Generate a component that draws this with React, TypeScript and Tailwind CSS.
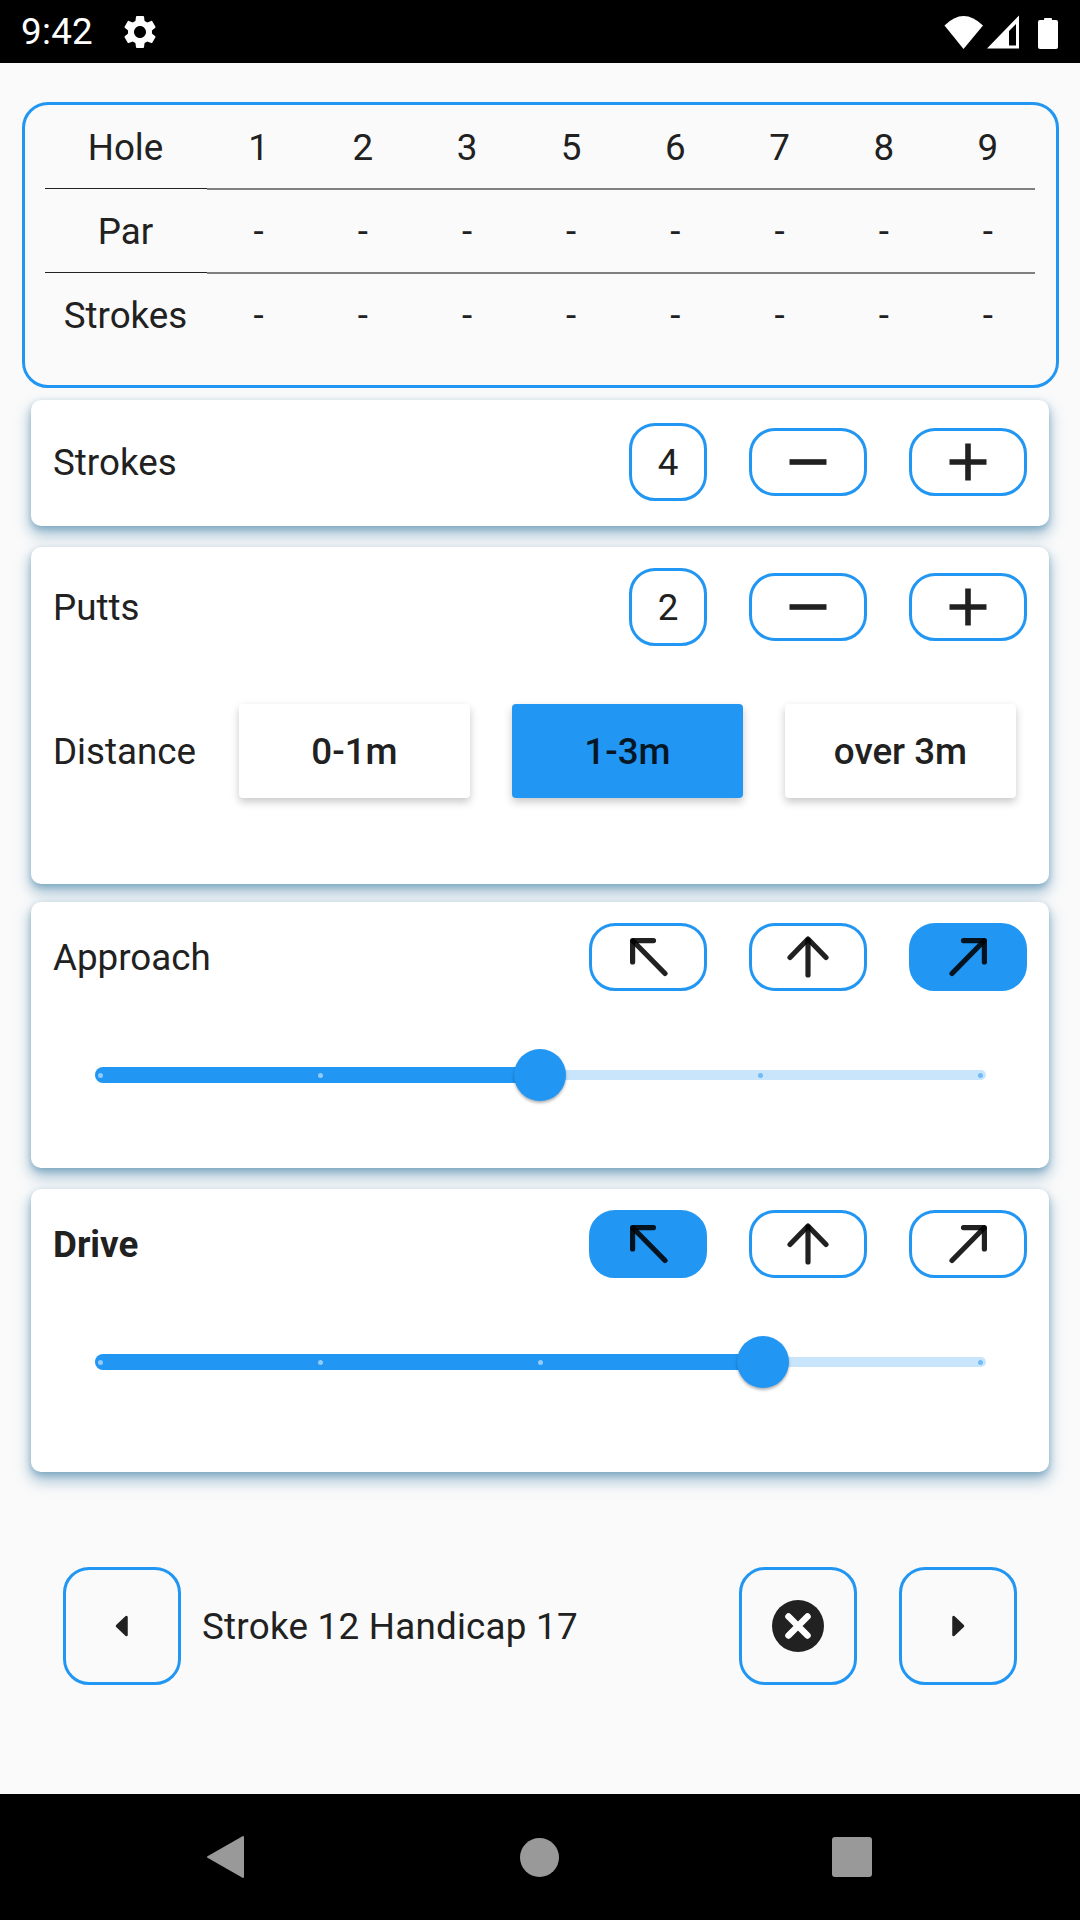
const holes = ["1", "2", "3", "5", "6", "7", "8", "9"];

const font = "font-['Roboto',sans-serif]";

function StatusBar() {
  return (
    <div className="flex h-[63px] shrink-0 items-center bg-black pl-[21px] pr-[21px] text-white">
      <span className="text-[36.75px] leading-[63px] tracking-[0.3px]">9:42</span>
      <svg className="ml-[27px] h-[40px] w-[40px]" viewBox="0 0 24 24" fill="white">
        <path d="M19.14,12.94c0.04-0.3,0.06-0.61,0.06-0.94c0-0.32-0.02-0.64-0.07-0.94l2.03-1.58c0.18-0.14,0.23-0.41,0.12-0.61 l-1.92-3.32c-0.12-0.22-0.37-0.29-0.59-0.22l-2.39,0.96c-0.5-0.38-1.03-0.7-1.62-0.94L14.4,2.81c-0.04-0.24-0.24-0.41-0.48-0.41 h-3.84c-0.24,0-0.43,0.17-0.47,0.41L9.25,5.35C8.66,5.59,8.12,5.92,7.63,6.29L5.24,5.33c-0.22-0.08-0.47,0-0.59,0.22L2.74,8.87 C2.62,9.08,2.66,9.34,2.86,9.48l2.03,1.58C4.84,11.36,4.8,11.69,4.8,12s0.02,0.64,0.07,0.94l-2.03,1.58 c-0.18,0.14-0.23,0.41-0.12,0.61l1.92,3.32c0.12,0.22,0.37,0.29,0.59,0.22l2.39-0.96c0.5,0.38,1.03,0.7,1.62,0.94l0.36,2.54 c0.05,0.24,0.24,0.41,0.48,0.41h3.84c0.24,0,0.44-0.17,0.47-0.41l0.36-2.54c0.59-0.24,1.13-0.56,1.62-0.94l2.39,0.96 c0.22,0.08,0.47,0,0.59-0.22l1.92-3.32c0.12-0.22,0.07-0.47-0.12-0.61L19.14,12.94z M12,15.6c-1.98,0-3.6-1.62-3.6-3.6 s1.62-3.6,3.6-3.6s3.6,1.62,3.6,3.6S13.98,15.6,12,15.6z" />
      </svg>
      <svg className="ml-auto h-[34px] w-[115px]" viewBox="0 0 115 34" fill="white">
        <path d="M0.5 10.5 Q19.5 -8.5 39 10.5 L19.5 34 Z" />
        <path fillRule="evenodd" d="M43 33.5 L75 0.5 V33.5 Z M65 30.5 H72 V9 L65 16 Z" />
        <path d="M100 4 Q100 3 101 3 H107 Q108 3 108 4 V5 H112 Q114 5 114 7 V32 Q114 34 112 34 H96 Q94 34 94 32 V7 Q94 5 96 5 H100 Z" />
      </svg>
    </div>
  );
}

function ScoreTable() {
  const rows = [
    { label: "Hole", cells: holes, line: true },
    { label: "Par", cells: holes.map(() => "-"), line: true },
    { label: "Strokes", cells: holes.map(() => "-"), line: false },
  ];
  return (
    <div className="mx-[21.5px] mt-[39px] h-[286px] rounded-[26px] border-[3px] border-[#2196f3] pl-[20px] pr-[21px]">
      <div className="overflow-hidden">
        <div className="w-[997px]">
          {rows.map((row) => (
            <div key={row.label} className="flex h-[84px] items-stretch first:h-[85px]">
              <div
                className={`mb-[1px] flex w-[162px] items-center justify-center ${row.line ? "border-b border-[#222222] pt-[2px]" : ""}`}
              >
                {row.label}
              </div>
              {row.cells.map((cell, i) => (
                <div
                  key={i}
                  className={`flex w-[104.2px] items-center justify-center ${row.line ? "border-b-2 border-[#808080] pt-[2px]" : ""}`}
                >
                  {cell}
                </div>
              ))}
            </div>
          ))}
        </div>
      </div>
    </div>
  );
}

function Card({ className, children }: { className: string; children: React.ReactNode }) {
  return (
    <div
      className={`mx-[31px] rounded-[10px] bg-white pl-[22px] pr-[22px] shadow-[0_8px_15px_1px_rgba(60,125,165,0.45),0_3px_6px_rgba(60,125,165,0.4)] ${className}`}
    >
      {children}
    </div>
  );
}

function Outlined({ className, active, children }: { className: string; active?: boolean; children?: React.ReactNode }) {
  return (
    <div
      className={`flex items-center justify-center rounded-[26px] border-[3px] border-[#2196f3] ${active ? "bg-[#2196f3]" : ""} ${className}`}
    >
      {children}
    </div>
  );
}

function Minus() {
  return (
    <svg className="h-[38px] w-[38px]" viewBox="0 0 38 38">
      <rect x="0.5" y="16.2" width="37" height="5.6" fill="#212121" />
    </svg>
  );
}

function Plus() {
  return (
    <svg className="h-[38px] w-[38px]" viewBox="0 0 38 38">
      <path d="M0.5 16.2H16.2V0.5H21.8V16.2H37.5V21.8H21.8V37.5H16.2V21.8H0.5Z" fill="#212121" />
    </svg>
  );
}

function Counter({ label, value }: { label: string; value: string }) {
  return (
    <div className="flex h-[78px] items-center">
      <span className="flex-1 pt-[1px]">{label}</span>
      <div className="flex items-center gap-[42px]">
        <Outlined className="h-[78px] w-[78px] pt-[2px]">{value}</Outlined>
        <Outlined className="h-[68px] w-[118px]">
          <Minus />
        </Outlined>
        <Outlined className="h-[68px] w-[118px]">
          <Plus />
        </Outlined>
      </div>
    </div>
  );
}

function ArrowLeftUp() {
  return (
    <svg className="h-[40px] w-[40px]" viewBox="0 0 40 40" fill="none" stroke="rgba(0,0,0,0.87)" strokeWidth="5.2" strokeLinecap="round">
      <path d="M4.6 25V3.6H25.5" strokeLinejoin="round" />
      <path d="M5 4L37 36.5" />
    </svg>
  );
}

function ArrowUp() {
  return (
    <svg className="h-[42px] w-[42px]" viewBox="0 0 42 42" fill="none" stroke="rgba(0,0,0,0.87)" strokeWidth="5.2" strokeLinecap="round" strokeLinejoin="round">
      <path d="M3 21.5L21 3L39 21.5" />
      <path d="M21 4V39" />
    </svg>
  );
}

function ArrowRightUp() {
  return (
    <svg className="h-[40px] w-[40px]" viewBox="0 0 40 40" fill="none" stroke="rgba(0,0,0,0.87)" strokeWidth="5.2" strokeLinecap="round">
      <path d="M36.4 25V3.6H15.5" strokeLinejoin="round" />
      <path d="M36 4L4 36.5" />
    </svg>
  );
}

function Directions({ label, active, bold }: { label: string; active: number; bold?: boolean }) {
  const icons = [<ArrowLeftUp />, <ArrowUp />, <ArrowRightUp />];
  return (
    <div className="flex h-[68px] items-center">
      <span className={`flex-1 pt-[1px] ${bold ? "font-bold" : ""}`}>{label}</span>
      <div className="flex gap-[42px]">
        {icons.map((icon, i) => (
          <Outlined key={i} className="h-[68px] w-[118px]" active={i === active}>
            {icon}
          </Outlined>
        ))}
      </div>
    </div>
  );
}

// px offsets along the track, ticks every 220
function Slider({ knob, className }: { knob: number; className: string }) {
  const ticks = [5, 225, 445, 665, 885];
  return (
    <div className={`relative ml-[42px] flex h-[52px] w-[891px] items-center ${className}`}>
      <div className="h-[10px] w-full rounded-full bg-[#c8e5fc]" />
      <div className="absolute left-0 top-[18px] h-[16px] rounded-l-full bg-[#2196f3]" style={{ width: knob }} />
      {ticks.map((t) => (
        <div
          key={t}
          className={`absolute top-[23.5px] h-[5px] w-[5px] rounded-full ${t < knob ? "bg-[#90cbf9]" : "bg-[#70bbf8]"}`}
          style={{ left: t - 2.5 }}
        />
      ))}
      <div
        className="absolute top-0 h-[52px] w-[52px] rounded-full bg-[#2196f3] shadow-[0_2px_3px_rgba(0,0,0,0.3)]"
        style={{ left: knob - 26 }}
      />
    </div>
  );
}

function DistanceButton({ text, active }: { text: string; active?: boolean }) {
  return (
    <div
      className={`flex h-[94px] w-[231px] items-center justify-center rounded-[4px] pt-[1px] font-medium tracking-normal shadow-[0_4px_8px_rgba(0,0,0,0.22)] ${active ? "bg-[#2196f3] text-black/85" : "bg-white"}`}
    >
      {text}
    </div>
  );
}

function TriangleLeft() {
  return (
    <svg className="h-[24px] w-[14px]" viewBox="0 0 14 24" fill="#212121" stroke="#212121" strokeWidth="2.5" strokeLinejoin="round">
      <path d="M2 12L11.5 3V21Z" />
    </svg>
  );
}

function TriangleRight() {
  return (
    <svg className="h-[24px] w-[14px]" viewBox="0 0 14 24" fill="#212121" stroke="#212121" strokeWidth="2.5" strokeLinejoin="round">
      <path d="M12 12L2.5 3V21Z" />
    </svg>
  );
}

function CancelIcon() {
  return (
    <svg className="h-[52px] w-[52px]" viewBox="0 0 52 52">
      <circle cx="26" cy="26" r="26" fill="#212121" />
      <path d="M16.5 16.5L35.5 35.5M35.5 16.5L16.5 35.5" stroke="white" strokeWidth="6.5" strokeLinecap="round" />
    </svg>
  );
}

function BottomBar() {
  return (
    <div className="mt-[95px] flex items-center pl-[63px] pr-[63px]">
      <Outlined className="h-[118px] w-[118px]">
        <TriangleLeft />
      </Outlined>
      <span className="ml-[21px] flex-1 pt-[1px] tracking-[0.25px]">Stroke 12 Handicap 17</span>
      <div className="flex gap-[42px]">
        <Outlined className="h-[118px] w-[118px]">
          <CancelIcon />
        </Outlined>
        <Outlined className="h-[118px] w-[118px]">
          <TriangleRight />
        </Outlined>
      </div>
    </div>
  );
}

function NavBar() {
  return (
    <div className="flex h-[126px] shrink-0 items-center bg-black">
      <svg className="ml-[206px] h-[44px] w-[40px]" viewBox="0 0 40 44" fill="#999999" stroke="#999999" strokeWidth="2" strokeLinejoin="round">
        <path d="M2 22L37 2V42Z" />
      </svg>
      <div className="ml-[274px] h-[39px] w-[39px] rounded-full bg-[#999999]" />
      <div className="ml-[273px] h-[40px] w-[40px] rounded-[3px] bg-[#999999]" />
    </div>
  );
}

export default function App() {
  return (
    <div className={`flex h-[1920px] w-[1080px] flex-col bg-[#fafafa] text-[36.75px] leading-[44px] text-[#212121] ${font}`}>
      <StatusBar />
      <div className="flex-1">
        <ScoreTable />

        <Card className="mt-[12px] flex h-[126px] flex-col justify-center pb-[2px]">
          <Counter label="Strokes" value="4" />
        </Card>

        <Card className="mt-[21px] h-[337px] pt-[21px]">
          <Counter label="Putts" value="2" />
          <div className="mt-[58px] flex items-center">
            <span className="w-[186px] pt-[1px]">Distance</span>
            <div className="flex gap-[42px]">
              <DistanceButton text="0-1m" />
              <DistanceButton text="1-3m" active />
              <DistanceButton text="over 3m" />
            </div>
          </div>
        </Card>

        <Card className="mt-[18px] h-[266px] pt-[21px]">
          <Directions label="Approach" active={2} />
          <Slider knob={445} className="mt-[58px]" />
        </Card>

        <Card className="mt-[21px] h-[283px] pt-[21px]">
          <Directions label="Drive" active={0} bold />
          <Slider knob={668} className="mt-[58px]" />
        </Card>

        <BottomBar />
      </div>
      <NavBar />
    </div>
  );
}
